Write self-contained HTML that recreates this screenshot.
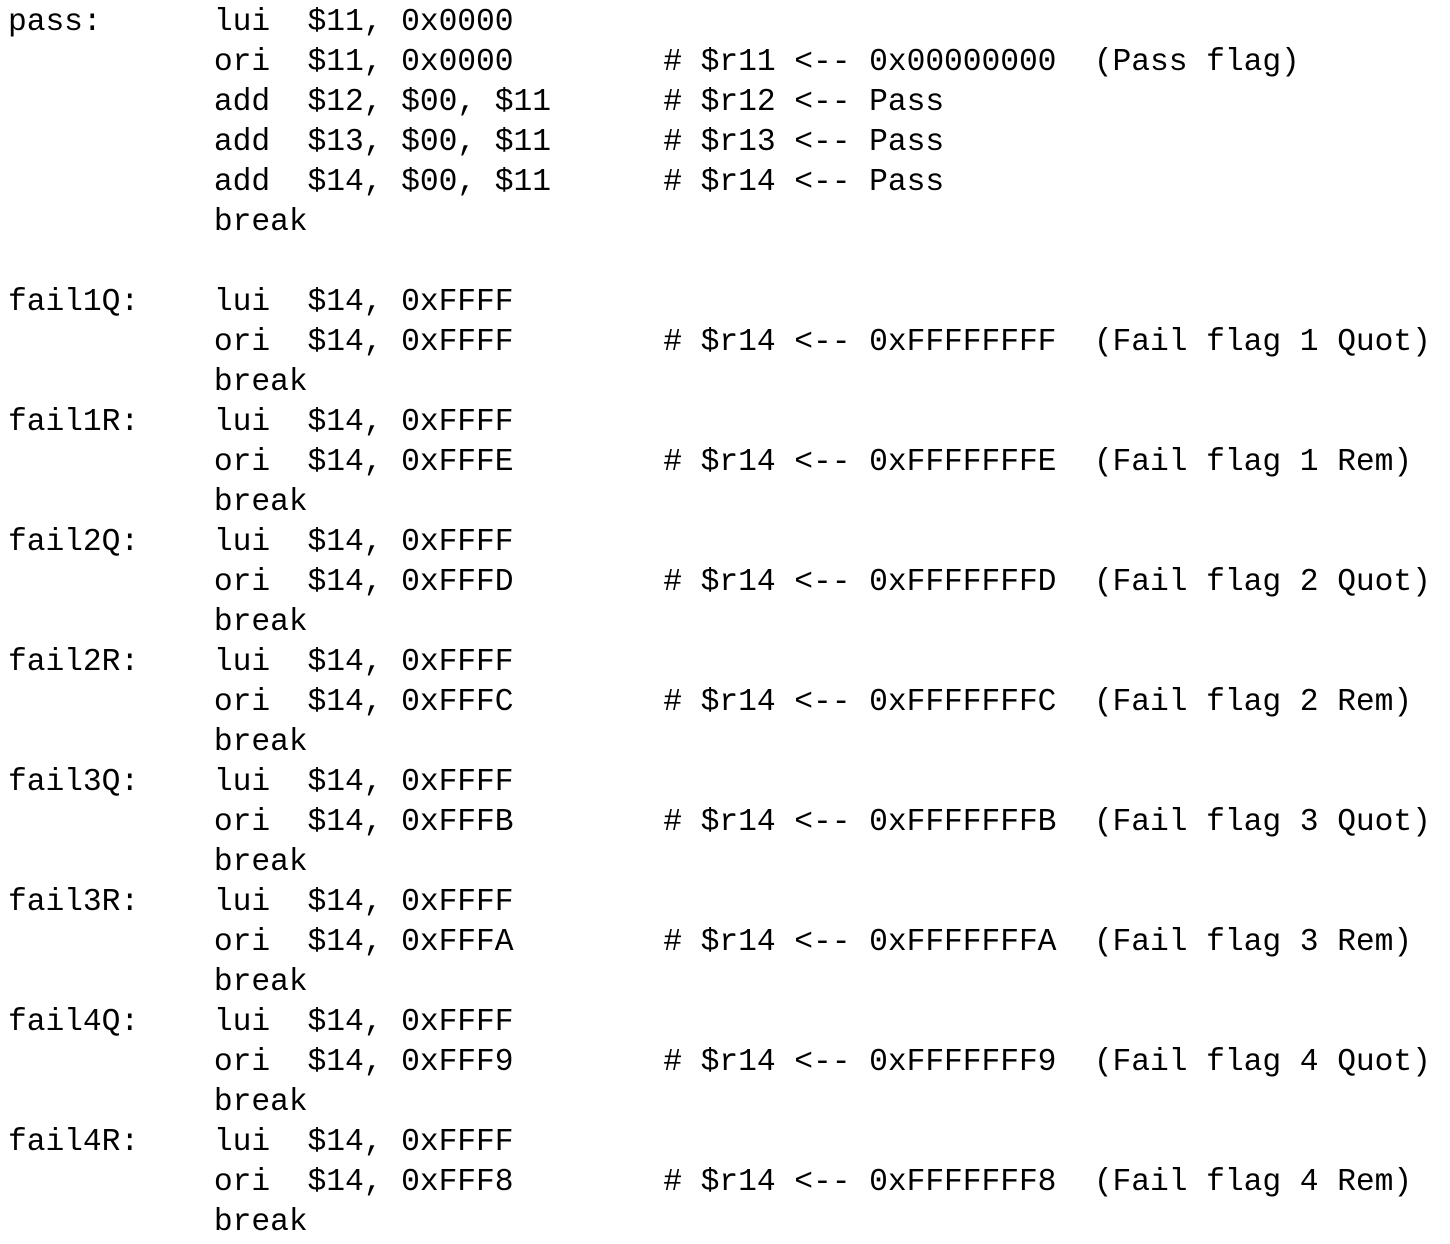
<!DOCTYPE html>
<html><head><meta charset="utf-8"><style>
html,body{margin:0;padding:0;background:#fff;width:1450px;height:1244px;overflow:hidden}
pre{margin:0;position:absolute;left:8px;top:3px;font-family:"Liberation Mono",monospace;font-size:31.3px;letter-spacing:-0.06px;line-height:40px;color:#000}
</style></head><body><pre>pass:      lui  $11, 0x0000
           ori  $11, 0x0000        # $r11 &lt;-- 0x00000000  (Pass flag)
           add  $12, $00, $11      # $r12 &lt;-- Pass
           add  $13, $00, $11      # $r13 &lt;-- Pass
           add  $14, $00, $11      # $r14 &lt;-- Pass
           break

fail1Q:    lui  $14, 0xFFFF
           ori  $14, 0xFFFF        # $r14 &lt;-- 0xFFFFFFFF  (Fail flag 1 Quot)
           break
fail1R:    lui  $14, 0xFFFF
           ori  $14, 0xFFFE        # $r14 &lt;-- 0xFFFFFFFE  (Fail flag 1 Rem)
           break
fail2Q:    lui  $14, 0xFFFF
           ori  $14, 0xFFFD        # $r14 &lt;-- 0xFFFFFFFD  (Fail flag 2 Quot)
           break
fail2R:    lui  $14, 0xFFFF
           ori  $14, 0xFFFC        # $r14 &lt;-- 0xFFFFFFFC  (Fail flag 2 Rem)
           break
fail3Q:    lui  $14, 0xFFFF
           ori  $14, 0xFFFB        # $r14 &lt;-- 0xFFFFFFFB  (Fail flag 3 Quot)
           break
fail3R:    lui  $14, 0xFFFF
           ori  $14, 0xFFFA        # $r14 &lt;-- 0xFFFFFFFA  (Fail flag 3 Rem)
           break
fail4Q:    lui  $14, 0xFFFF
           ori  $14, 0xFFF9        # $r14 &lt;-- 0xFFFFFFF9  (Fail flag 4 Quot)
           break
fail4R:    lui  $14, 0xFFFF
           ori  $14, 0xFFF8        # $r14 &lt;-- 0xFFFFFFF8  (Fail flag 4 Rem)
           break</pre></body></html>
